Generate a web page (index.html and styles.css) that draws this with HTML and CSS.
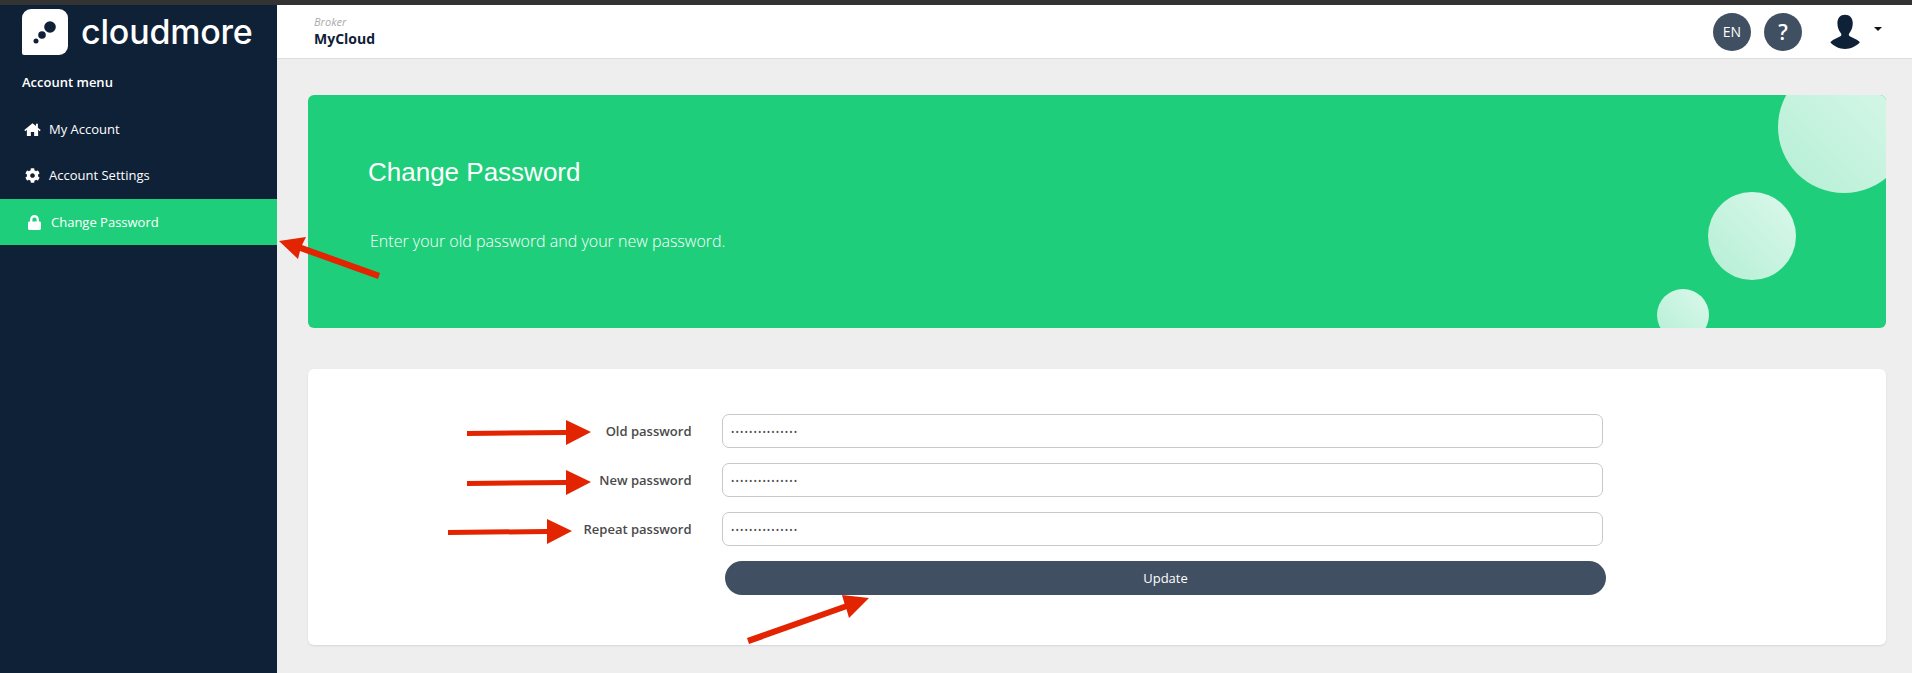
FILE: index.html
```html
<!DOCTYPE html>
<html lang="en">
<head>
    <meta charset="UTF-8">
    <title>Change Password</title>
    <link rel="stylesheet" href="styles.css">
</head>
<body>
    <div class="top-strip"></div>
    <div class="app">
        <aside class="sidebar">
            <div class="brand">
                <svg class="brand-mark" viewBox="0 0 46 46">
                    <path d="M0 9a9 9 0 0 1 9-9h28a9 9 0 0 1 9 9v28a9 9 0 0 1-9 9H2a2 2 0 0 1-2-2z" fill="#fff"/>
                    <circle cx="28" cy="18" r="5.8" fill="#0f2137"/>
                    <circle cx="20" cy="26" r="3.8" fill="#0f2137"/>
                    <circle cx="14" cy="32" r="2.5" fill="#0f2137"/>
                </svg>
                <span class="brand-name">cloudmore</span>
            </div>
            <div class="menu-title">Account menu</div>
            <nav class="menu">
                <a class="menu-item">
                    <svg class="menu-icon home" viewBox="0 0 576 512"><path d="M288 40L8 272l34 40 54-44v212h136V340h112v140h136V268l54 44 34-40-96-80V60h-64v80z"/></svg>
                    My Account
                </a>
                <a class="menu-item">
                    <svg class="menu-icon cog" viewBox="0 0 512 512"><path d="M487.4 315.7l-42.6-24.6c4.3-23.2 4.3-47 0-70.2l42.6-24.6c4.9-2.8 7.1-8.6 5.5-14-11.1-35.6-30-67.8-54.7-94.6-3.8-4.1-10-5.1-14.8-2.3L380.8 110c-17.9-15.4-38.5-27.3-60.8-35.1V25.8c0-5.6-3.9-10.5-9.4-11.7-36.7-8.2-74.3-7.8-109.2 0-5.5 1.2-9.4 6.1-9.4 11.7V75c-22.2 7.9-42.8 19.8-60.8 35.1L88.7 85.5c-4.9-2.8-11-1.9-14.8 2.3-24.7 26.7-43.6 58.9-54.7 94.6-1.7 5.4.6 11.2 5.5 14L67.3 221c-4.3 23.2-4.3 47 0 70.2l-42.6 24.6c-4.9 2.8-7.1 8.6-5.5 14 11.1 35.6 30 67.8 54.7 94.6 3.8 4.1 10 5.1 14.8 2.3l42.6-24.6c17.9 15.4 38.5 27.3 60.8 35.1v49.2c0 5.6 3.9 10.5 9.4 11.7 36.7 8.2 74.3 7.8 109.2 0 5.5-1.2 9.4-6.1 9.4-11.7v-49.2c22.2-7.9 42.8-19.8 60.8-35.1l42.6 24.6c4.9 2.8 11 1.9 14.8-2.3 24.7-26.7 43.6-58.9 54.7-94.6 1.5-5.5-.7-11.3-5.6-14.1zM256 336c-44.1 0-80-35.9-80-80s35.9-80 80-80 80 35.9 80 80-35.9 80-80 80z"/></svg>
                    Account Settings
                </a>
                <a class="menu-item active">
                    <svg class="menu-icon lock" viewBox="0 0 448 512"><path d="M400 224h-24v-72C376 68.2 307.8 0 224 0S72 68.2 72 152v72H48c-26.5 0-48 21.500-48 48v192c0 26.5 21.500 48 48 48h352c26.500 0 48-21.500 48-48V272c0-26.500-21.500-48-48-48zm-104 0H152v-72c0-39.700 32.300-72 72-72s72 32.300 72 72v72z"/></svg>
                    Change Password
                </a>
            </nav>
        </aside>

        <div class="main">
            <header class="header">
                <div class="broker">
                    <span class="broker-label">Broker</span>
                    <span class="broker-name">MyCloud</span>
                </div>
                <div class="header-actions">
                    <span class="round-btn lang">EN</span>
                    <span class="round-btn help">?</span>
                    <svg class="avatar" viewBox="0 0 32 37">
                        <path d="M16 0c5 0 8.300 3.600 8.300 9.200 0 4.600-1.700 8.400-3.700 10.600-.8 1-.7 2.600.5 3.300 2.300 1.300 7.100 3 10 5.400.7.600.7 1.200.1 1.800C27.500 34 22 36.500 16 36.500S4.500 34 1 30.300c-.6-.6-.6-1.200.1-1.800 2.900-2.400 7.700-4.100 10-5.400 1.200-.7 1.300-2.300.5-3.300-2-2.200-3.700-6-3.700-10.600C7.900 3.600 11 0 16 0z" fill="#0f2137"/>
                    </svg>
                    <span class="caret"></span>
                </div>
            </header>

            <main class="content">
                <section class="hero">
                    <span class="bubble bubble-lg"></span>
                    <span class="bubble bubble-md"></span>
                    <span class="bubble bubble-sm"></span>
                    <h1>Change Password</h1>
                    <p>Enter your old password and your new password.</p>
                </section>

                <section class="form-card">
                    <form class="password-form">
                        <label for="oldPassword">Old password</label>
                        <input type="password" id="oldPassword" value="passwordpasswor">
                        <label for="newPassword">New password</label>
                        <input type="password" id="newPassword" value="passwordpasswor">
                        <label for="repeatPassword">Repeat password</label>
                        <input type="password" id="repeatPassword" value="passwordpasswor">
                        <button type="button">Update</button>
                    </form>
                </section>
            </main>
        </div>
    </div>

    <!-- red annotation arrows drawn on top of the screenshot -->
    <svg class="arrows" viewBox="0 0 1912 673">
        <g fill="#e32400">
            <path d="M279 241l27-4-4 8 78 28-2 6-78-28-2 8z"/>
            <path d="M467 431l99-1v-10l25 12-25 13v-10l-99 1z"/>
            <path d="M467 481l99-1v-10l25 12-25 13v-10l-99 1z"/>
            <path d="M448 530l99-1v-10l25 12-25 13v-10l-99 1z"/>
            <path d="M747 638l97.500-34.300-2.500-8.700 27 3-20 20-2.500-8.700-97.500 34.700z"/>
        </g>
    </svg>
</body>
</html>
```

FILE: styles.css
```css
* {
    box-sizing: border-box;
}

html,
body {
    height: 100%;
}

body {
    margin: 0;
    display: flex;
    flex-direction: column;
    overflow: hidden;
    position: relative;
    font-family: 'Open Sans', sans-serif;
    background-color: #eeeeee;
    color: #4a4a4a;
}

.top-strip {
    height: 5px;
    flex: none;
    background: #333333;
}

.app {
    flex: 1;
    display: flex;
    min-height: 0;
}

/* sidebar */
.sidebar {
    width: 277px;
    flex: none;
    background: #0f2137;
    color: #ffffff;
}

.brand {
    display: flex;
    align-items: center;
    gap: 13px;
    padding: 4px 0 0 22px;
}

.brand-mark {
    width: 46px;
    height: 46px;
}

.brand-name {
    font-family: 'Inter', sans-serif;
    font-size: 34px;
    font-weight: 500;
    letter-spacing: -0.2px;
    line-height: 46px;
}

.menu-title {
    margin-top: 18px;
    padding-left: 22px;
    font-size: 13px;
    font-weight: 600;
    line-height: 18px;
}

.menu {
    margin-top: 15px;
}

.menu-item {
    display: flex;
    align-items: center;
    height: 46px;
    padding-left: 24px;
    font-size: 13px;
}

.menu-item.active {
    margin-top: 1px;
    background: #1fce7a;
}

.menu-icon {
    fill: #ffffff;
    flex: none;
}

.menu-icon.home {
    width: 17px;
    height: 15px;
    margin-right: 8px;
}

.menu-icon.cog {
    width: 15px;
    height: 15px;
    margin: 0 9px 0 1px;
}

.menu-icon.lock {
    width: 13px;
    height: 15px;
    margin: 0 10px 0 4px;
}

/* header */
.main {
    flex: 1;
    min-width: 0;
    display: flex;
    flex-direction: column;
}

.header {
    height: 54px;
    flex: none;
    display: flex;
    align-items: center;
    justify-content: space-between;
    padding: 0 30px 0 37px;
    background: #ffffff;
    border-bottom: 1px solid #dddddd;
}

.broker {
    display: flex;
    flex-direction: column;
}

.broker-label {
    font-size: 11px;
    font-style: italic;
    line-height: 15px;
    color: #aaaaaa;
}

.broker-name {
    font-size: 14px;
    font-weight: 700;
    line-height: 20px;
    color: #0f2137;
}

.header-actions {
    display: flex;
    align-items: center;
}

.round-btn {
    width: 38px;
    height: 38px;
    display: flex;
    align-items: center;
    justify-content: center;
    border-radius: 50%;
    background: #414f62;
    color: #ffffff;
}

.lang {
    font-size: 14px;
    margin-right: 13px;
}

.help {
    font-size: 21px;
    font-weight: 600;
    margin-right: 28px;
}

.avatar {
    width: 30px;
    height: 36px;
}

.caret {
    margin-left: 14px;
    margin-bottom: 6px;
    border-top: 4px solid #111111;
    border-left: 4px solid transparent;
    border-right: 4px solid transparent;
}

/* content */
.content {
    padding: 36px 26px 0 31px;
}

.hero {
    position: relative;
    height: 233px;
    padding: 61px 0 0 60px;
    overflow: hidden;
    border-radius: 6px;
    background: #1fce7a;
    color: #ffffff;
}

.hero h1 {
    margin: 0;
    font-family: 'Liberation Sans', sans-serif;
    font-size: 26px;
    font-weight: 400;
    line-height: 32px;
}

.hero p {
    margin: 41px 0 0 2px;
    font-size: 16px;
    font-weight: 300;
    line-height: 24px;
}

.bubble {
    position: absolute;
    border-radius: 50%;
    background: linear-gradient(45deg, #b5efd4, #dbf8ec);
}

.bubble-lg {
    width: 132px;
    height: 132px;
    top: -34px;
    right: -24px;
}

.bubble-md {
    width: 88px;
    height: 88px;
    top: 97px;
    right: 90px;
}

.bubble-sm {
    width: 52px;
    height: 52px;
    top: 194px;
    right: 177px;
}

.form-card {
    height: 276px;
    margin-top: 41px;
    padding-top: 45px;
    border-radius: 6px;
    background: #ffffff;
    box-shadow: 0 1px 2px rgba(0, 0, 0, 0.1);
}

.password-form {
    display: grid;
    grid-template-columns: 383.500px 881px;
    grid-auto-rows: 34px;
    column-gap: 30.500px;
    row-gap: 15px;
    align-items: center;
}

.password-form label {
    text-align: right;
    font-size: 13px;
    font-weight: 600;
}

.password-form input {
    width: 100%;
    height: 34px;
    padding: 0 8px;
    border: 1px solid #c8c8c8;
    border-radius: 7px;
    background: #ffffff;
    font-family: 'Open Sans', sans-serif;
    font-size: 9px;
    letter-spacing: 1.100px;
    color: #4a4a4a;
}

.password-form button {
    grid-column: 2;
    width: 100%;
    height: 34px;
    margin-left: 3px;
    border: none;
    border-radius: 17px;
    background: #414f62;
    color: #ffffff;
    font-family: 'Open Sans', sans-serif;
    font-size: 13px;
}

.arrows {
    position: absolute;
    top: 0;
    left: 0;
    width: 1912px;
    height: 673px;
    pointer-events: none;
}
```
